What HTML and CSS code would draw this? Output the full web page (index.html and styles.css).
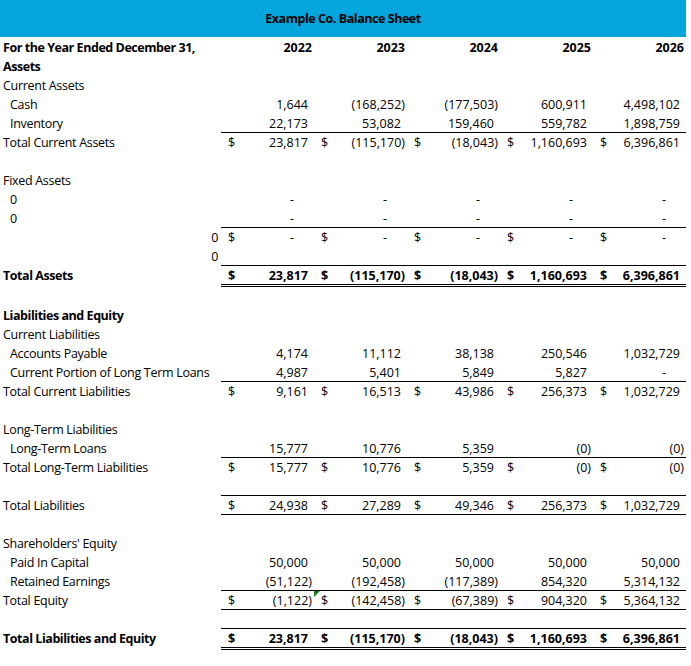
FILE: index.html
```html
<!DOCTYPE html>
<html lang="en">
<head>
<meta charset="utf-8">
<title>Example Co. Balance Sheet</title>
<link rel="stylesheet" href="styles.css">
</head>
<body>
<div class="sheet">
  <div class="title">Example Co. Balance Sheet</div>

  <div class="row b">
    <div class="lab">For the Year Ended December 31,</div>
    <div class="yr">2022</div><div class="yr">2023</div><div class="yr">2024</div><div class="yr">2025</div><div class="yr">2026</div>
  </div>
  <div class="row b"><div class="lab">Assets</div></div>
  <div class="row"><div class="lab">Current Assets</div></div>
  <div class="row">
    <div class="lab ind">Cash</div>
    <div class="c"><span class="v">1,644</span></div>
    <div class="c"><span class="v n">(168,252)</span></div>
    <div class="c"><span class="v n">(177,503)</span></div>
    <div class="c"><span class="v">600,911</span></div>
    <div class="c"><span class="v">4,498,102</span></div>
  </div>
  <div class="row">
    <div class="lab ind">Inventory</div>
    <div class="c"><span class="v">22,173</span></div>
    <div class="c"><span class="v">53,082</span></div>
    <div class="c"><span class="v">159,460</span></div>
    <div class="c"><span class="v">559,782</span></div>
    <div class="c"><span class="v">1,898,759</span></div>
  </div>
  <div class="row bt">
    <div class="lab">Total Current Assets</div>
    <div class="c"><span>$</span><span class="v">23,817</span></div>
    <div class="c"><span>$</span><span class="v n">(115,170)</span></div>
    <div class="c"><span>$</span><span class="v n">(18,043)</span></div>
    <div class="c"><span>$</span><span class="v">1,160,693</span></div>
    <div class="c"><span>$</span><span class="v">6,396,861</span></div>
  </div>
  <div class="row"></div>
  <div class="row"><div class="lab">Fixed Assets</div></div>
  <div class="row">
    <div class="lab ind">0</div>
    <div class="c"><span class="v z">-</span></div>
    <div class="c"><span class="v z">-</span></div>
    <div class="c"><span class="v z">-</span></div>
    <div class="c"><span class="v z">-</span></div>
    <div class="c"><span class="v z">-</span></div>
  </div>
  <div class="row">
    <div class="lab ind">0</div>
    <div class="c"><span class="v z">-</span></div>
    <div class="c"><span class="v z">-</span></div>
    <div class="c"><span class="v z">-</span></div>
    <div class="c"><span class="v z">-</span></div>
    <div class="c"><span class="v z">-</span></div>
  </div>
  <div class="row bt">
    <div class="lab r">0</div>
    <div class="c"><span>$</span><span class="v z">-</span></div>
    <div class="c"><span>$</span><span class="v z">-</span></div>
    <div class="c"><span>$</span><span class="v z">-</span></div>
    <div class="c"><span>$</span><span class="v z">-</span></div>
    <div class="c"><span>$</span><span class="v z">-</span></div>
  </div>
  <div class="row"><div class="lab r">0</div></div>
  <div class="row bt dbl b">
    <div class="lab">Total Assets</div>
    <div class="c"><span>$</span><span class="v">23,817</span></div>
    <div class="c"><span>$</span><span class="v n">(115,170)</span></div>
    <div class="c"><span>$</span><span class="v n">(18,043)</span></div>
    <div class="c"><span>$</span><span class="v">1,160,693</span></div>
    <div class="c"><span>$</span><span class="v">6,396,861</span></div>
  </div>
  <div class="gap"></div>

  <div class="row b"><div class="lab">Liabilities and Equity</div></div>
  <div class="row"><div class="lab">Current Liabilities</div></div>
  <div class="row">
    <div class="lab ind">Accounts Payable</div>
    <div class="c"><span class="v">4,174</span></div>
    <div class="c"><span class="v">11,112</span></div>
    <div class="c"><span class="v">38,138</span></div>
    <div class="c"><span class="v">250,546</span></div>
    <div class="c"><span class="v">1,032,729</span></div>
  </div>
  <div class="row">
    <div class="lab ind">Current Portion of Long Term Loans</div>
    <div class="c"><span class="v">4,987</span></div>
    <div class="c"><span class="v">5,401</span></div>
    <div class="c"><span class="v">5,849</span></div>
    <div class="c"><span class="v">5,827</span></div>
    <div class="c"><span class="v z">-</span></div>
  </div>
  <div class="row bt">
    <div class="lab">Total Current Liabilities</div>
    <div class="c"><span>$</span><span class="v">9,161</span></div>
    <div class="c"><span>$</span><span class="v">16,513</span></div>
    <div class="c"><span>$</span><span class="v">43,986</span></div>
    <div class="c"><span>$</span><span class="v">256,373</span></div>
    <div class="c"><span>$</span><span class="v">1,032,729</span></div>
  </div>
  <div class="row"></div>
  <div class="row"><div class="lab">Long-Term Liabilities</div></div>
  <div class="row">
    <div class="lab ind">Long-Term Loans</div>
    <div class="c"><span class="v">15,777</span></div>
    <div class="c"><span class="v">10,776</span></div>
    <div class="c"><span class="v">5,359</span></div>
    <div class="c"><span class="v n">(0)</span></div>
    <div class="c"><span class="v n">(0)</span></div>
  </div>
  <div class="row bt">
    <div class="lab">Total Long-Term Liabilities</div>
    <div class="c"><span>$</span><span class="v">15,777</span></div>
    <div class="c"><span>$</span><span class="v">10,776</span></div>
    <div class="c"><span>$</span><span class="v">5,359</span></div>
    <div class="c"><span>$</span><span class="v n">(0)</span></div>
    <div class="c"><span>$</span><span class="v n">(0)</span></div>
  </div>
  <div class="row"></div>
  <div class="row bt">
    <div class="lab">Total Liabilities</div>
    <div class="c"><span>$</span><span class="v">24,938</span></div>
    <div class="c"><span>$</span><span class="v">27,289</span></div>
    <div class="c"><span>$</span><span class="v">49,346</span></div>
    <div class="c"><span>$</span><span class="v">256,373</span></div>
    <div class="c"><span>$</span><span class="v">1,032,729</span></div>
  </div>
  <div class="row bt">
    <div class="lab"></div><div class="c"></div><div class="c"></div><div class="c"></div><div class="c"></div><div class="c"></div>
  </div>
  <div class="row"><div class="lab">Shareholders' Equity</div></div>
  <div class="row">
    <div class="lab ind">Paid In Capital</div>
    <div class="c"><span class="v">50,000</span></div>
    <div class="c"><span class="v">50,000</span></div>
    <div class="c"><span class="v">50,000</span></div>
    <div class="c"><span class="v">50,000</span></div>
    <div class="c"><span class="v">50,000</span></div>
  </div>
  <div class="row">
    <div class="lab ind">Retained Earnings</div>
    <div class="c"><span class="v n">(51,122)</span></div>
    <div class="c"><span class="v n">(192,458)</span></div>
    <div class="c"><span class="v n">(117,389)</span></div>
    <div class="c"><span class="v">854,320</span></div>
    <div class="c"><span class="v">5,314,132</span></div>
  </div>
  <div class="row bt">
    <div class="lab">Total Equity</div>
    <div class="c"><span>$</span><span class="v n">(1,122)</span></div>
    <div class="c flag"><span>$</span><span class="v n">(142,458)</span></div>
    <div class="c"><span>$</span><span class="v n">(67,389)</span></div>
    <div class="c"><span>$</span><span class="v">904,320</span></div>
    <div class="c"><span>$</span><span class="v">5,364,132</span></div>
  </div>
  <div class="row bt">
    <div class="lab"></div><div class="c"></div><div class="c"></div><div class="c"></div><div class="c"></div><div class="c"></div>
  </div>
  <div class="row bt dbl b">
    <div class="lab">Total Liabilities and Equity</div>
    <div class="c"><span>$</span><span class="v">23,817</span></div>
    <div class="c"><span>$</span><span class="v n">(115,170)</span></div>
    <div class="c"><span>$</span><span class="v n">(18,043)</span></div>
    <div class="c"><span>$</span><span class="v">1,160,693</span></div>
    <div class="c"><span>$</span><span class="v">6,396,861</span></div>
  </div>
</div>
</body>
</html>
```

FILE: styles.css
```css
body {
  margin: 0;
  background: #ffffff;
  color: #000000;
  font-family: "Open Sans", "Liberation Sans", sans-serif;
  font-size: 12.5px;
}

.sheet {
  width: 686px;
}

.title {
  box-sizing: border-box;
  height: 37px;
  padding-top: 2px;
  background: #02a6dc;
  font-weight: 700;
  text-align: center;
  line-height: 34px;
  letter-spacing: -0.45px;
}

.row {
  display: grid;
  grid-template-columns: 221px repeat(5, 93px);
  height: 19px;
}

.row > div {
  box-sizing: border-box;
  height: 100%;
  padding-top: 2px;
  line-height: 17px;
  white-space: nowrap;
}

.b {
  font-weight: 700;
}

.lab {
  padding-left: 3px;
  letter-spacing: -0.3px;
}

.b .lab {
  letter-spacing: -0.45px;
}

.lab.ind {
  padding-left: 10px;
}

.lab.r {
  text-align: right;
  padding-right: 3px;
}

.yr {
  text-align: right;
  padding-right: 2px;
}

.c {
  display: flex;
  justify-content: space-between;
  padding-left: 7px;
  padding-right: 6px;
  position: relative;
}

.c .v {
  margin-left: auto;
}

.c .n {
  margin-right: -4px;
}

.c .z {
  margin-right: 14px;
}

.row.bt > .c {
  border-top: 1px solid #000000;
  padding-top: 1px;
}

.row.dbl {
  height: 22px;
}

.row.dbl > div {
  line-height: 17px;
}

.row.dbl > .c {
  border-bottom: 3px double #000000;
}

.gap {
  height: 18px;
}

.flag::before {
  content: "";
  position: absolute;
  left: 0;
  top: 0;
  width: 0;
  height: 0;
  border-top: 6px solid #1e7b1e;
  border-right: 6px solid transparent;
}
```
